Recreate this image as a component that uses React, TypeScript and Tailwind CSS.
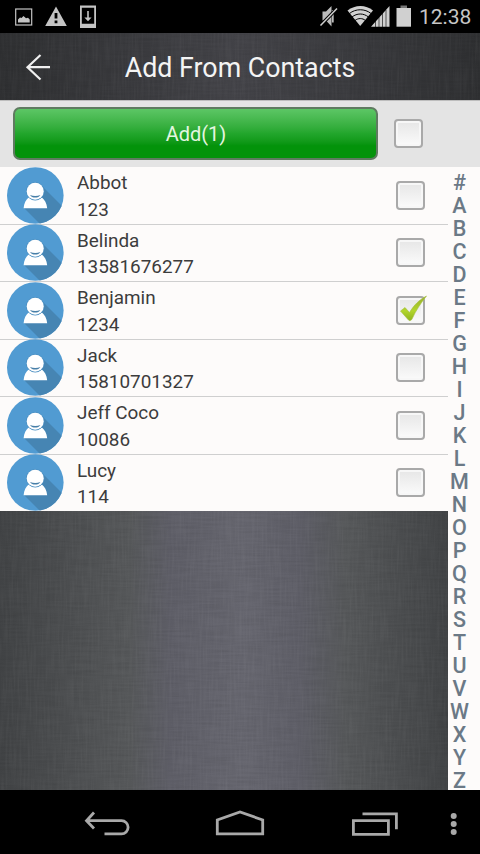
import { useState } from 'react';
import clsx from 'clsx';

interface Contact {
    name: string;
    phone: string;
}

const CONTACTS: Contact[] = [
    { name: 'Abbot', phone: '123' },
    { name: 'Belinda', phone: '13581676277' },
    { name: 'Benjamin', phone: '1234' },
    { name: 'Jack', phone: '15810701327' },
    { name: 'Jeff Coco', phone: '10086' },
    { name: 'Lucy', phone: '114' },
];

const LETTERS = '#ABCDEFGHIJKLMNOPQRSTUVWXYZ'.split('');

function StatusBar() {
    return (
        <div className="flex h-[33px] shrink-0 items-center justify-between bg-black">
            <svg width="100" height="33" fill="#c4c4c4">
                <rect x="15.7" y="9" width="16" height="16" fill="none" stroke="#c4c4c4" strokeWidth="1.2" />
                <path d="M18 22.5v-3l2-2 1.5.6 2-2.1 2.5 2.3 2-.6 1.7 1.800v3z" />
                <path fillRule="evenodd" d="M56 6.5 66.8 26H45.2zM54.6 13v5.6h2.8V13zm0 7.6v2.6h2.8v-2.6z" />
                <path fillRule="evenodd" d="M80 5.5h16V28H80zM81.8 7.8v16h12.4v-16z" />
                <path d="M87.2 11h1.6v6.6h2.8L88 21.3l-3.6-3.7h2.8z" />
            </svg>
            <div className="flex items-center">
                <svg width="105" height="33" fill="#d0d0d0">
                    <path d="M8.5 11.5h3.5L17.5 6v20.5L12 20.5H8.5z" fill="#bbb" />
                    <path d="M18.8 10v12.5" fill="none" stroke="#bbb" strokeWidth="1.8" />
                    <path d="M6.5 25.5 23 8.5" stroke="#000" strokeWidth="3.4" />
                    <path d="M6.5 25.5 23 8.5" stroke="#cfcfcf" strokeWidth="1.5" />
                    <path d="M33.5 10.5C41 4.5 52 4.5 59 10.5L46.2 26z" />
                    <g fill="none" stroke="#000" strokeWidth="1">
                        <path d="M35.5 13.5c6-5 15.500-5 21.5 0M38 17c5-4 11.500-4 16.5 0M41 20.5c3.2-2.6 7.4-2.6 10.5 0" />
                    </g>
                    <path d="M75.5 6v20.7H57z" />
                    <path d="M61.5 20v7M65 17v10M68.5 13v14M72 10v17" stroke="#000" strokeWidth=".6" />
                    <path d="M82.5 8H97v18.7H82.5z" />
                    <path d="M86.5 5.5H93V8h-6.500z" fill="#777" />
                </svg>
                <span className="w-[61px] pt-[2px] text-[21px] leading-[31px] text-[#c6c6c6]">12:38</span>
            </div>
        </div>
    );
}

function Header() {
    return (
        <header className="relative flex h-[67px] shrink-0 items-center justify-center bg-linear-to-r from-[#2f3032] via-[#444449] to-[#2f3032]">
            <Weave />
            <svg className="absolute top-[19px] left-[24px]" width="28" height="30" fill="none" stroke="#f0f0f0" strokeWidth="2.2">
                <path d="M16.5 3 3.5 15.2 16.5 27.5M4 15.2h22" />
            </svg>
            <h1 className="relative pt-[3px] text-[26.8px] text-[#f4f4f4]">Add From Contacts</h1>
        </header>
    );
}

// fine linen texture laid over the dark panels
function Weave() {
    return (
        <svg className="pointer-events-none absolute inset-0 h-full w-full opacity-15">
            <filter id="weave-h" x="0" y="0" width="100%" height="100%">
                <feTurbulence type="fractalNoise" baseFrequency="0.03 0.5" numOctaves="2" seed="4" />
                <feColorMatrix values="0 0 0 0 0  0 0 0 0 0  0 0 0 0 0  0.8 0 0 0 -0.25" />
            </filter>
            <filter id="weave-v" x="0" y="0" width="100%" height="100%">
                <feTurbulence type="fractalNoise" baseFrequency="0.5 0.03" numOctaves="2" seed="9" />
                <feColorMatrix values="0 0 0 0 1  0 0 0 0 1  0 0 0 0 1  0.5 0 0 0 -0.2" />
            </filter>
            <rect width="100%" height="100%" filter="url(#weave-h)" />
            <rect width="100%" height="100%" filter="url(#weave-v)" />
        </svg>
    );
}

function Checkbox({ checked, onChange, label }: { checked: boolean; onChange: () => void; label: string }) {
    return (
        <button
            type="button"
            role="checkbox"
            aria-checked={checked}
            aria-label={label}
            onClick={onChange}
            className="relative h-[29px] w-[29px] shrink-0 rounded-[4px] border-2 border-[#a9a9a9] bg-linear-to-b from-[#e6e6e6] to-[#fbfbfb] shadow-[inset_0_0_0_2px_#f7f7f7]"
        >
            {checked && (
                <svg className="absolute -top-[4px] -left-[1px]" width="33" height="31">
                    <defs>
                        <linearGradient id="tick" x1="0" y1="0" x2="0" y2="1">
                            <stop offset="0" stopColor="#98b02c" />
                            <stop offset=".6" stopColor="#b2d52c" />
                            <stop offset="1" stopColor="#8fb41e" />
                        </linearGradient>
                    </defs>
                    <path d="M3.5 17 8 13.5 12.5 18.5C17 11 22 6 29.5 2 24 9 19 16 14.8 25.5 13.5 27 12 27 11 25.5z" fill="url(#tick)" stroke="#a3bd40" strokeWidth=".6" />
                </svg>
            )}
        </button>
    );
}

function Avatar() {
    return (
        <svg className="-my-px shrink-0" width="57" height="57" viewBox="0 0 57 57">
            <clipPath id="disc">
                <circle cx="28.3" cy="28.5" r="28.3" />
            </clipPath>
            <circle cx="28.3" cy="28.5" r="28.3" fill="#519bd2" />
            <path d="M35 19 62 46V70H46L17 41z" fill="#4685b3" clipPath="url(#disc)" />
            <path d="M16.6 41.2c.5-5 2.3-8.5 5-10.7 4 2.8 9.3 2.8 13.3 0 2.7 2.2 4.8 5.7 5.3 10.7z" fill="#fff" />
            <circle cx="28.2" cy="24.3" r="9.2" fill="#4a8fc2" />
            <circle cx="28.2" cy="24.3" r="8.5" fill="#fff" />
            <path d="M23 28c3.5 1.2 7 1.2 10.4 0-1.5 3.4-8.9 3.4-10.4 0z" fill="#477fa8" />
        </svg>
    );
}

function ContactRow({ contact, checked, onToggle }: { contact: Contact; checked: boolean; onToggle: () => void }) {
    return (
        <li className="flex flex-1 items-center border-b border-[#cfcfcf] pr-[23px] pl-[7px] last:border-b-0">
            <Avatar />
            <div className="ml-[13px] flex-1 pt-[3px] text-[18.9px] leading-[26.5px] text-[#3c3c3c]">
                <div>{contact.name}</div>
                <div>{contact.phone}</div>
            </div>
            <Checkbox checked={checked} onChange={onToggle} label={contact.name} />
        </li>
    );
}

function NavBar() {
    return (
        <nav className="flex h-[64px] shrink-0 items-center bg-black">
            <svg width="480" height="64" fill="none" stroke="#a9a9a9" strokeWidth="2.8">
                <path d="M94 22.5 86.5 30.7 94 38.5M87 30.7h34.5a6.5 6.5 0 0 1 0 13.2H104.5" />
                <path d="M217.3 43.8V30L240 21.9l22.7 8.1v13.8z" />
                <path d="M353.4 30.6h35v13.8h-35zM362.5 23.8h33.9v15.5" />
                <g fill="#a9a9a9" stroke="none">
                    <circle cx="453.7" cy="26" r="3" />
                    <circle cx="453.7" cy="34" r="3" />
                    <circle cx="453.7" cy="42" r="3" />
                </g>
            </svg>
        </nav>
    );
}

export default function App() {
    const [selected, setSelected] = useState<string[]>(['Benjamin']);
    const allSelected = selected.length === CONTACTS.length;

    const toggle = (name: string) => {
        setSelected((prev) => (prev.includes(name) ? prev.filter((n) => n !== name) : [...prev, name]));
    };

    return (
        <div className="flex h-[854px] w-[480px] flex-col overflow-hidden bg-black font-[Roboto,sans-serif]">
            <StatusBar />
            <Header />
            <div className="flex h-[67px] shrink-0 items-center border-t border-[#bdbdbd] bg-[#e4e4e4] pb-[2px] pl-[13px]">
                <button
                    type="button"
                    className={clsx(
                        'h-[53px] w-[365px] rounded-[7px] border-2 border-[#5f7a60] pt-px pl-px text-[20px] text-[#e4f6e0]',
                        'bg-linear-to-b from-[#5cc665] via-[#22a62c] via-50% to-[#03930a] to-75%',
                    )}
                >
                    Add({selected.length})
                </button>
                <div className="ml-[16px] flex">
                    <Checkbox
                        checked={allSelected}
                        onChange={() => setSelected(allSelected ? [] : CONTACTS.map((c) => c.name))}
                        label="Select all"
                    />
                </div>
            </div>
            <main className="flex min-h-0 flex-1">
                <div className="flex w-[448px] flex-col">
                    <ul className="flex h-[344px] shrink-0 flex-col bg-[#fdfbfa]">
                        {CONTACTS.map((c) => (
                            <ContactRow
                                key={c.name}
                                contact={c}
                                checked={selected.includes(c.name)}
                                onToggle={() => toggle(c.name)}
                            />
                        ))}
                    </ul>
                    <div className="relative flex-1 bg-[linear-gradient(90deg,#424446_0%,#57595b_29%,#5f5f68_38%,#676770_54%,#5f5f68_67%,#57595b_77%,#424446_100%)]">
                        <Weave />
                    </div>
                </div>
                <div className="flex w-[32px] flex-col items-center bg-[#fdfbfa] pt-[4px] pr-[9px] text-[21.5px] font-medium text-[#6b7986]">
                    {LETTERS.map((l) => (
                        <span key={l} className="h-[23px] shrink-0 leading-[23px] last:h-[21px]">
                            {l}
                        </span>
                    ))}
                </div>
            </main>
            <NavBar />
        </div>
    );
}
